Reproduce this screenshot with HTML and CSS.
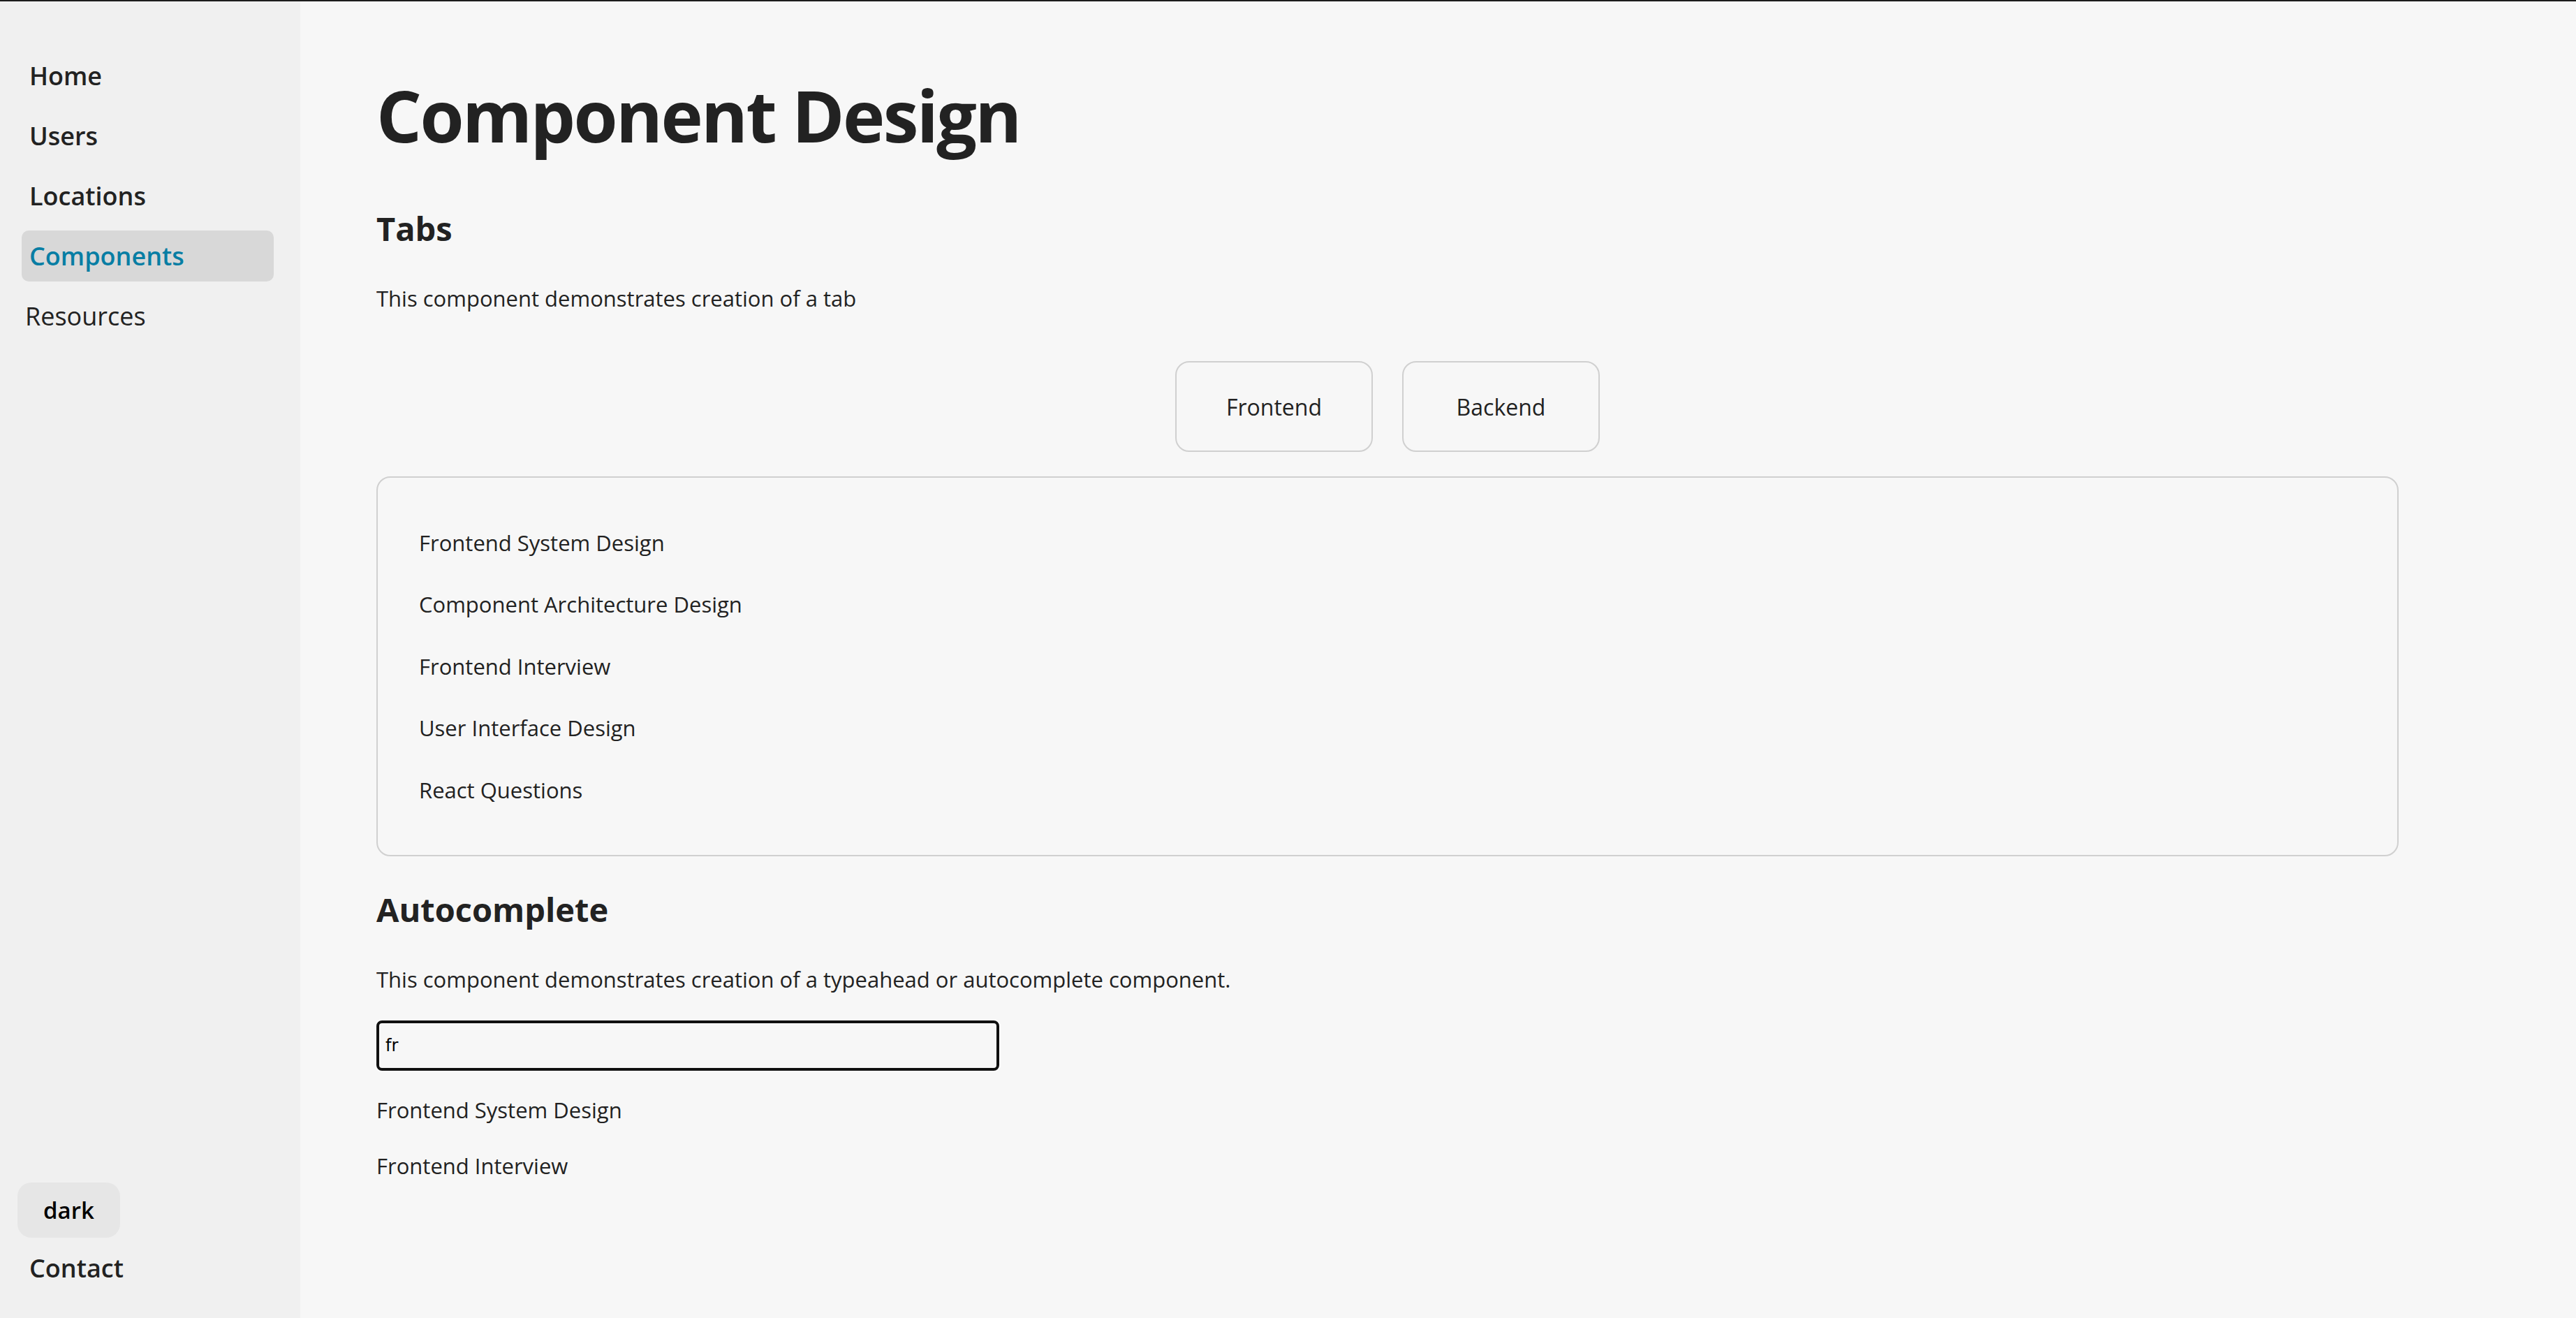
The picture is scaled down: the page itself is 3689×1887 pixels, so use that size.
FILE: index.html
```html
<!DOCTYPE html>
<html lang="en">
<head>
<meta charset="utf-8">
<title>Component Design</title>
<link rel="stylesheet" href="styles.css">
</head>
<body>
<div class="app">
  <aside class="sidebar">
    <nav class="nav">
      <a class="nav-link" href="#">Home</a>
      <a class="nav-link" href="#">Users</a>
      <a class="nav-link" href="#">Locations</a>
      <a class="nav-link active" href="#">Components</a>
      <a class="nav-link plain" href="#">Resources</a>
    </nav>
    <div class="side-bottom">
      <button class="theme-btn" type="button">dark</button>
      <a class="contact" href="#">Contact</a>
    </div>
  </aside>
  <main class="main">
    <h1 class="title">Component Design</h1>

    <section class="section">
      <h2 class="section-title">Tabs</h2>
      <p class="desc">This component demonstrates creation of a tab</p>
      <div class="tab-bar">
        <button class="tab" type="button">Frontend</button>
        <button class="tab" type="button">Backend</button>
      </div>
      <div class="tab-panel">
        <ul class="panel-list">
          <li>Frontend System Design</li>
          <li>Component Architecture Design</li>
          <li>Frontend Interview</li>
          <li>User Interface Design</li>
          <li>React Questions</li>
        </ul>
      </div>
    </section>

    <section class="section auto">
      <h2 class="section-title">Autocomplete</h2>
      <p class="desc">This component demonstrates creation of a typeahead or autocomplete component.</p>
      <input class="search" type="text" value="fr">
      <ul class="suggestions">
        <li>Frontend System Design</li>
        <li>Frontend Interview</li>
      </ul>
    </section>
  </main>
</div>
</body>
</html>
```

FILE: styles.css
```css
* {
  box-sizing: border-box;
}

html, body {
  margin: 0;
  padding: 0;
}

body {
  border-top: 2px solid #1c1c1c;
  background: #f7f7f7;
  font-family: "Open Sans", "Noto Sans", sans-serif;
  color: #222;
}

.app {
  display: flex;
  min-height: 1885px;
}

.sidebar {
  width: 430px;
  flex: 0 0 430px;
  background: #f0f0f0;
  display: flex;
  flex-direction: column;
  justify-content: space-between;
}

.nav {
  display: flex;
  flex-direction: column;
  padding-top: 70px;
}

.nav-link {
  display: block;
  height: 73px;
  line-height: 73px;
  margin: 0 38px 13px 31px;
  padding: 0 11px;
  border-radius: 10px;
  font-size: 36px;
  font-weight: 600;
  color: #222;
  text-decoration: none;
}

.nav-link.active {
  background: #d8d8d8;
  color: #087ea4;
}

.nav-link.plain {
  padding-left: 5px;
  font-weight: 400;
}

.side-bottom {
  display: flex;
  flex-direction: column;
  align-items: flex-start;
  padding-bottom: 35px;
}

.theme-btn {
  margin-left: 25px;
  width: 147px;
  height: 79px;
  border: none;
  border-radius: 20px;
  background: #e6e6e6;
  font-family: "Open Sans", "Noto Sans", sans-serif;
  font-size: 33px;
  font-weight: 600;
  color: #000;
  padding: 0;
}

.contact {
  display: block;
  height: 73px;
  line-height: 73px;
  margin-top: 7px;
  padding-left: 42px;
  font-size: 36px;
  font-weight: 600;
  color: #222;
  text-decoration: none;
}

.main {
  flex: 1;
  padding: 102px 254px 0 109px;
}

.title {
  margin: 0 0 72px;
  font-size: 102px;
  line-height: 122px;
  font-weight: 700;
  letter-spacing: -2.6px;
  color: #222;
}

.section-title {
  margin: 0 0 48px;
  font-size: 47px;
  line-height: 58px;
  font-weight: 700;
  color: #222;
}

.desc {
  margin: 0;
  font-size: 31px;
  line-height: 46px;
}

.tab-bar {
  display: flex;
  justify-content: center;
  gap: 42px;
  margin-top: 67px;
}

.tab {
  width: 283px;
  height: 130px;
  border: 2px solid #d0d0d0;
  border-radius: 20px;
  background: transparent;
  font-family: "Open Sans", "Noto Sans", sans-serif;
  font-size: 32px;
  color: #222;
  padding: 0;
}

.tab-panel {
  margin-top: 35px;
  border: 2px solid #d0d0d0;
  border-radius: 20px;
  padding: 70px 59px 70px;
}

.panel-list,
.suggestions {
  list-style: none;
  margin: 0;
  padding: 0;
  display: flex;
  flex-direction: column;
  font-size: 31px;
  line-height: 46px;
}

.panel-list {
  gap: 42.4px;
}

.auto {
  margin-top: 47px;
}

.search {
  display: block;
  margin-top: 36px;
  width: 892px;
  height: 72px;
  border: 4px solid #111;
  border-radius: 8px;
  padding: 0 9px;
  background: #f7f7f7;
  box-shadow: 0 0 0 2px #fff;
  font-family: "DejaVu Sans", sans-serif;
  font-size: 24px;
  color: #000;
  outline: none;
}

.suggestions {
  margin-top: 33px;
  gap: 34px;
}
```
